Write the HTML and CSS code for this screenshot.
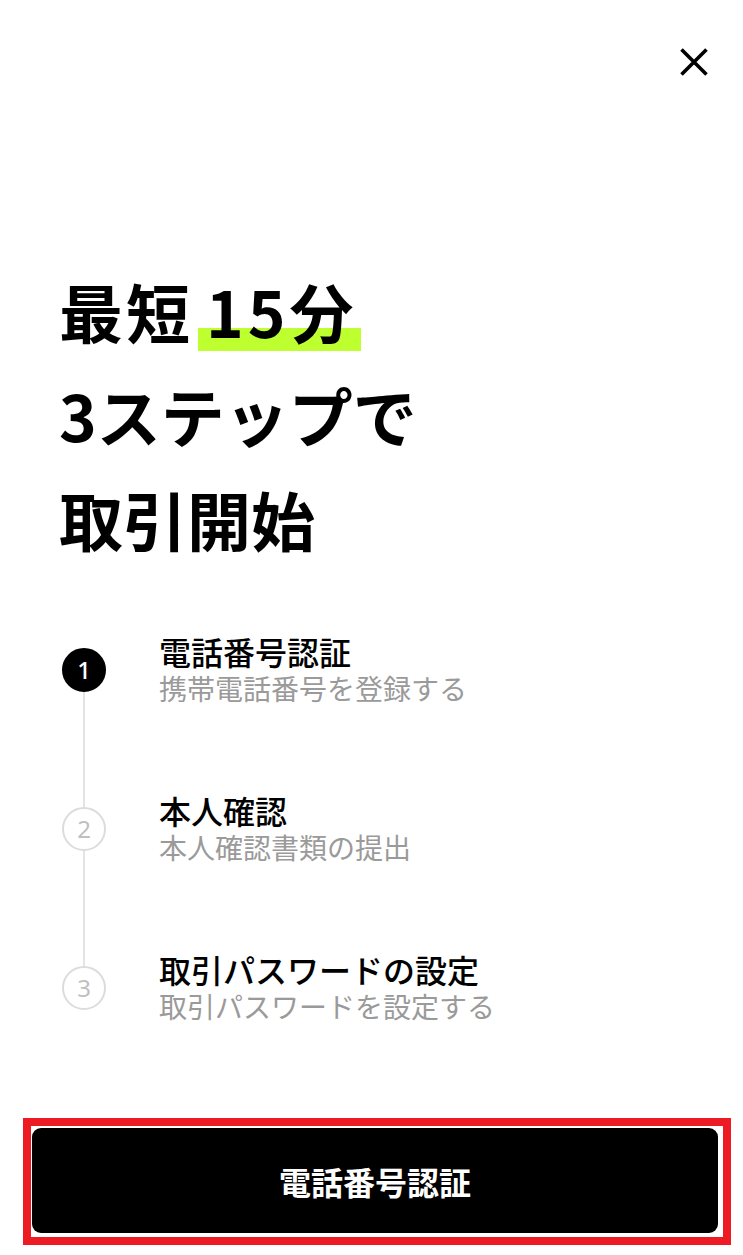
FILE: index.html
```html
<!DOCTYPE html>
<html lang="ja">
<head>
<meta charset="UTF-8">
<meta name="viewport" content="width=device-width, initial-scale=1.0">
<title>取引開始までの3ステップ</title>
<link rel="stylesheet" href="styles.css">
</head>
<body>
<div class="topbar">
    <button class="close-btn" aria-label="閉じる">
        <svg width="28" height="28" viewBox="0 0 28 28">
            <path d="M1.5 1.5 L26.5 26.5 M26.5 1.5 L1.5 26.5" stroke="#000" stroke-width="3.6" fill="none"/>
        </svg>
    </button>
</div>

<h1 class="headline">
    <span class="lead">最短</span><span class="mark">15分</span><br>
    3ステップで<br>
    取引開始
</h1>

<div class="steps">
    <div class="step step-first">
        <div class="marker">
            <div class="rail"></div>
            <div class="num num-active">1</div>
            <div class="rail"></div>
        </div>
        <div class="step-text">
            <div class="step-title">電話番号認証</div>
            <div class="step-sub">携帯電話番号を登録する</div>
        </div>
    </div>
    <div class="step">
        <div class="marker">
            <div class="rail"></div>
            <div class="num">2</div>
            <div class="rail"></div>
        </div>
        <div class="step-text">
            <div class="step-title">本人確認</div>
            <div class="step-sub">本人確認書類の提出</div>
        </div>
    </div>
    <div class="step step-last">
        <div class="marker">
            <div class="rail"></div>
            <div class="num">3</div>
            <div class="rail"></div>
        </div>
        <div class="step-text">
            <div class="step-title">取引パスワードの設定</div>
            <div class="step-sub">取引パスワードを設定する</div>
        </div>
    </div>
</div>

<div class="cta-frame">
    <button class="cta">電話番号認証</button>
</div>
</body>
</html>
```

FILE: styles.css
```css
body {
    font-family: "Noto Sans CJK JP", "Noto Sans", sans-serif;
    margin: 0;
    padding: 0;
    background: #fff;
    color: #000;
}

.topbar {
    display: flex;
    justify-content: flex-end;
    padding: 48px 35px 0;
}

.close-btn {
    background: none;
    border: none;
    padding: 0;
    width: 28px;
    height: 28px;
    cursor: pointer;
}

.close-btn svg {
    display: block;
}

.headline {
    margin: 182px 0 0 59px;
    font-size: 64px;
    font-weight: 700;
    line-height: 104px;
}

.lead {
    letter-spacing: 3px;
}

.mark {
    margin-left: 5px;
    padding: 0 3px 0 8px;
    letter-spacing: 4px;
    background: linear-gradient(#bdff2f, #bdff2f) no-repeat left bottom 5px / 100% 23px;
}

.steps {
    margin: 20px 0 0 62px;
}

.step {
    display: flex;
    align-items: center;
    height: 159px;
}

.marker {
    display: flex;
    flex-direction: column;
    align-items: center;
    width: 44px;
    height: 100%;
}

.rail {
    flex: 1;
    width: 2px;
    background: #e4e4e4;
}

.step-first .rail:first-child,
.step-last .rail:last-child {
    background: transparent;
}

.num {
    width: 40px;
    height: 40px;
    border: 2px solid #dcdcdc;
    border-radius: 50%;
    display: flex;
    align-items: center;
    justify-content: center;
    font-family: "Noto Sans", sans-serif;
    font-size: 24px;
    color: #bfbfbf;
    background: #fff;
}

.num-active {
    background: #000;
    border-color: #000;
    color: #fff;
    font-weight: 500;
}

.step-text {
    margin-left: 53px;
}

.step-title {
    font-size: 32px;
    font-weight: 500;
    line-height: 37px;
    color: #000;
}

.step-sub {
    font-size: 28px;
    line-height: 37px;
    color: #9a9a9a;
}

.cta-frame {
    margin: 51px 12px 0 23px;
    border: 8px solid #ed1c24;
    padding: 2px 5px 4px 1px;
}

.cta {
    display: block;
    width: 100%;
    height: 105px;
    border: none;
    border-radius: 9px;
    background: #000;
    color: #fff;
    font-family: "Noto Sans CJK JP", sans-serif;
    font-size: 32px;
    font-weight: 700;
    cursor: pointer;
}
```
